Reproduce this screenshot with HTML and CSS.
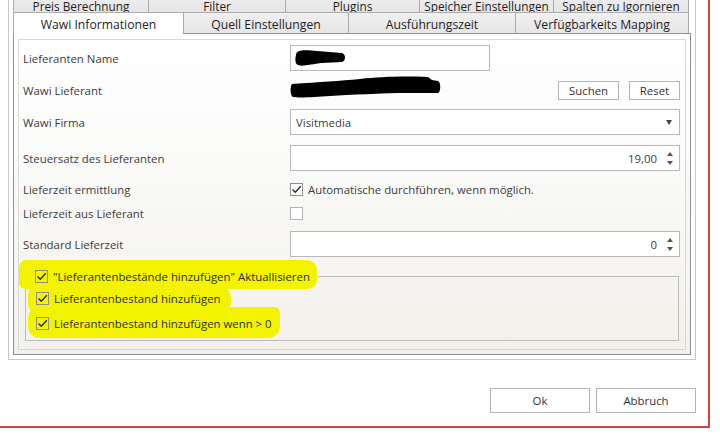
FILE: index.html
```html
<!DOCTYPE html>
<html>
<head>
<meta charset="utf-8">
<title>Wawi Informationen</title>
<link rel="stylesheet" href="styles.css">
</head>
<body>
<div class="window">
  <div class="frame">
    <div class="tabrow back">
      <div class="tab">Preis Berechnung</div>
      <div class="tab">Filter</div>
      <div class="tab">Plugins</div>
      <div class="tab">Speicher Einstellungen</div>
      <div class="tab last">Spalten zu Igornieren</div>
    </div>
    <div class="tabrow front">
      <div class="tab selected">Wawi Informationen</div>
      <div class="tab">Quell Einstellungen</div>
      <div class="tab">Ausführungszeit</div>
      <div class="tab last">Verfügbarkeits Mapping</div>
    </div>
    <div class="content">
      <div class="panel">
        <div class="row r1">
          <span class="label">Lieferanten Name</span>
          <div class="field name-field">
            <svg class="scribble s1" width="56" height="22" viewBox="0 0 56 22"><path d="M4 8 C4 2 15 3 25 4 L50 6 C54 7 54 14 50 15 L30 16 C20 17 10 20 6 18 C3 17 3 12 4 8 Z" fill="#000"/></svg>
          </div>
        </div>
        <div class="row r2">
          <span class="label">Wawi Lieferant</span>
          <div class="lief">
            <svg class="scribble s2" width="152" height="23" viewBox="0 0 152 23"><path d="M2 8 C30 6 50 5 70 3 C90 1 110 0 138 1 L142 4 L148 5 C151 6 151 16 148 17 L120 17 C90 17 60 19 40 20 C25 21 10 22 3 21 C0 20 0 10 2 8 Z" fill="#000"/></svg>
            <div class="btns">
              <button class="btn suchen">Suchen</button>
              <button class="btn reset">Reset</button>
            </div>
          </div>
        </div>
        <div class="row r3">
          <span class="label">Wawi Firma</span>
          <div class="field combo">
            <span class="value">Visitmedia</span>
            <span class="arrow-down"></span>
          </div>
        </div>
        <div class="row r4">
          <span class="label">Steuersatz des Lieferanten</span>
          <div class="field spin">
            <span class="num">19,00</span>
            <span class="spinner"><span class="tri-up"></span><span class="tri-down"></span></span>
          </div>
        </div>
        <div class="row r5">
          <span class="label">Lieferzeit ermittlung</span>
          <label class="check">
            <span class="box checked"><svg width="11" height="11" viewBox="0 0 11 11"><path d="M1.5 5.5 L4.3 8.3 L9.8 2.2" fill="none" stroke="#2b2b2b" stroke-width="1.4"/></svg></span>
            <span>Automatische durchführen, wenn möglich.</span>
          </label>
        </div>
        <div class="row r6">
          <span class="label">Lieferzeit aus Lieferant</span>
          <label class="check"><span class="box"></span></label>
        </div>
        <div class="row r7">
          <span class="label">Standard Lieferzeit</span>
          <div class="field spin">
            <span class="num">0</span>
            <span class="spinner"><span class="tri-up"></span><span class="tri-down"></span></span>
          </div>
        </div>
        <fieldset class="group">
          <legend>
            <span class="hl hl1">
              <span class="box checked hlbox"><svg width="11" height="11" viewBox="0 0 11 11"><path d="M1.5 5.5 L4.3 8.3 L9.8 2.2" fill="none" stroke="#2b2b00" stroke-width="1.4"/></svg></span>
              <span>"Lieferantenbestände hinzufügen" Aktuallisieren</span>
            </span>
          </legend>
          <div class="grow ga">
            <span class="hl hl2">
              <span class="box checked hlbox"><svg width="11" height="11" viewBox="0 0 11 11"><path d="M1.5 5.5 L4.3 8.3 L9.8 2.2" fill="none" stroke="#2b2b00" stroke-width="1.4"/></svg></span>
              <span>Lieferantenbestand hinzufügen</span>
            </span>
          </div>
          <div class="grow gb">
            <span class="hl hl3">
              <span class="box checked hlbox"><svg width="11" height="11" viewBox="0 0 11 11"><path d="M1.5 5.5 L4.3 8.3 L9.8 2.2" fill="none" stroke="#2b2b00" stroke-width="1.4"/></svg></span>
              <span>Lieferantenbestand hinzufügen wenn &gt; 0</span>
            </span>
          </div>
        </fieldset>
      </div>
    </div>
  </div>
  <div class="actions">
    <button class="btn big">Ok</button>
    <button class="btn big">Abbruch</button>
  </div>
</div>
</body>
</html>
```

FILE: styles.css
```css
* { box-sizing: border-box; }
html, body { margin: 0; padding: 0; background: #fff; overflow: hidden; }
body {
  font-family: "Open Sans", "Noto Sans", "DejaVu Sans", sans-serif;
  font-size: 11.4px;
  color: #3c3c3c;
  width: 720px;
  height: 434px;
}
.window {
  width: 710px;
  height: 428px;
  border-right: 2px solid #c94646;
  border-bottom: 2px solid #c94646;
  display: flex;
  flex-direction: column;
}
.frame {
  margin-left: 8px;
  width: 688px;
  height: 360px;
  border: 1px solid #c8c8c8;
  border-top: none;
  padding: 0 4px 4px 4px;
  display: flex;
  flex-direction: column;
}
.tabrow { display: grid; height: 21px; }
.tabrow.back { grid-template-columns: 135px 137px 134px 134px 136px; margin-top: -9px; }
.tabrow.front { grid-template-columns: 170px 165px 167px 174px; }
.tab {
  border-top: 1px solid #acacac;
  border-left: 1px solid #acacac;
  background: linear-gradient(#f0f0f0, #e5e5e5);
  color: #1e1e1e;
  font-size: 12.2px;
  display: flex;
  align-items: center;
  justify-content: center;
  white-space: nowrap;
  padding-top: 1px;
}
.tab.last { border-right: 1px solid #acacac; }
.back .tab { align-items: flex-start; line-height: 14px; padding-top: 7px; font-size: 11.8px; }
.tab.selected {
  background: #fff;
  height: 22px;
  position: relative;
  z-index: 1;
}
.content {
  flex: 1;
  border: 1px solid #8d9196;
  padding: 5px 4px 4px 4px;
  background: linear-gradient(#ffffff 0%, #fbfbfa 35%, #f2f0ea 100%);
  display: flex;
  flex-direction: column;
}
.panel {
  flex: 1;
  border: 1px solid #d8d8d8;
  padding: 5px 5px 0 4px;
}
.row {
  display: grid;
  grid-template-columns: 267px 1fr;
  align-items: center;
  height: 26px;
}
.r2, .r3 { margin-top: 6px; }
.r4 { margin-top: 10px; }
.r5 { margin-top: 6px; height: 24px; }
.r6 { height: 24px; }
.r7 { margin-top: 6px; }
.label { white-space: nowrap; }
.field {
  height: 26px;
  border: 1px solid #b9b9b9;
  background: #fff;
  display: flex;
  align-items: center;
}
.name-field { width: 200px; }
.scribble { display: block; }
.s1 { margin-left: 1px; }
.lief { display: flex; align-items: center; height: 26px; }
.s2 { margin-left: 0; margin-top: -5px; }
.btns { margin-left: auto; display: flex; gap: 10px; }
.btn {
  font-family: inherit;
  font-size: 11.4px;
  color: #333;
  background: #fff;
  border: 1px solid #b4b4b4;
  padding: 0;
  height: 19px;
}
.suchen { width: 61px; }
.reset { width: 51px; }
.combo { padding: 0 6px 0 5px; justify-content: space-between; }
.arrow-down {
  width: 0; height: 0;
  border-left: 3px solid transparent;
  border-right: 3px solid transparent;
  border-top: 5px solid #444;
  margin-right: 1px;
}
.spin { justify-content: flex-end; padding-right: 6px; }
.num { margin-right: 10px; }
.spinner { display: flex; flex-direction: column; gap: 5px; align-items: center; width: 6px; }
.tri-up {
  width: 0; height: 0;
  border-left: 3px solid transparent;
  border-right: 3px solid transparent;
  border-bottom: 4px solid #555;
}
.tri-down {
  width: 0; height: 0;
  border-left: 3px solid transparent;
  border-right: 3px solid transparent;
  border-top: 4px solid #555;
}
.check { display: flex; align-items: center; gap: 5px; white-space: nowrap; }
.box {
  width: 13px; height: 13px;
  border: 1px solid #b3b3b3;
  background: #fff;
  display: flex;
  align-items: center;
  justify-content: center;
  flex: none;
}
.box.checked { border-color: #8f8f8f; }
.group {
  margin: 11px 1px 0 2px;
  padding: 0 0 5px 10px;
  border: 1px solid #bdbdbd;
  min-width: 0;
}
.group legend {
  margin-left: -2px;
  padding: 0 8px 0 1px;
  height: 16px;
  display: flex;
  align-items: center;
}
.grow { height: 24px; display: flex; align-items: center; }
.ga { margin-top: 2px; }
.gb { margin-top: 1px; }
.hl {
  position: relative;
  z-index: 0;
  display: inline-flex;
  align-items: center;
  gap: 5px;
  white-space: nowrap;
  color: #2f2f1a;
}
.hl::before {
  content: "";
  position: absolute;
  z-index: -1;
  background: #f3f300;
  border-radius: 7px 10px 9px 6px;
}
.hl1::before { left: -16px; right: -7px; top: -9px; bottom: -5px; }
.hl2::before { left: -8px; right: -10px; top: -4px; bottom: -5px; }
.hl3::before { left: -8px; right: -8px; top: -9px; bottom: -7px; border-radius: 10px 6px 12px 12px; }
.hlbox { background: transparent; border-color: #9a9a2a; }
.actions {
  display: flex;
  justify-content: flex-end;
  gap: 6px;
  padding-right: 12px;
  margin-top: 28px;
}
.btn.big { width: 100px; height: 25px; }
```
